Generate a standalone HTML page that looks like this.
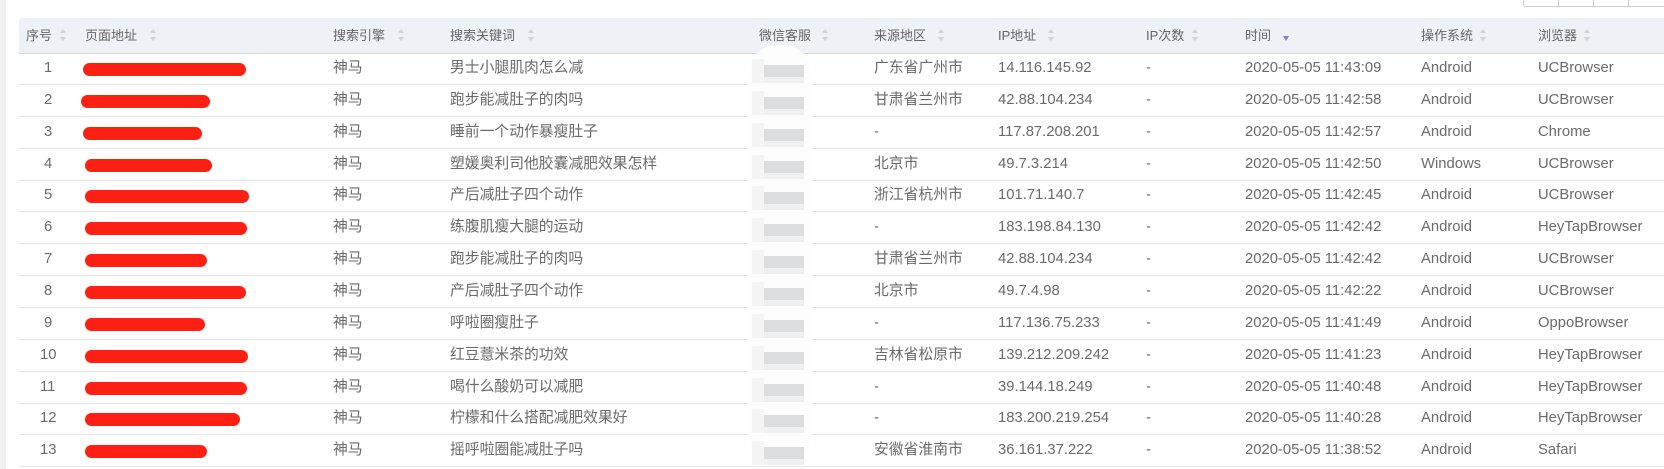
<!DOCTYPE html><html><head><meta charset="utf-8"><style>
body{margin:0;width:1664px;height:469px;background:#fff;position:relative;overflow:hidden;font-family:"Liberation Sans","Noto Sans CJK SC",sans-serif;font-size:13px;color:#666}
.strip{position:absolute;left:0;top:0;width:6px;height:469px;background:#f0f0f0}
.hdr{position:absolute;left:19px;top:18px;right:0;height:35px;background:#eef1f6;border-bottom:1px solid #d3d6dc;border-radius:3px 0 0 0}
.t{position:absolute;white-space:nowrap;line-height:15px}
.b{font-size:14.8px;line-height:17px;color:#6a6a6a}
.row{position:absolute;left:19px;right:0;height:31px;border-bottom:1px solid #e6e6e6}
.s{position:absolute;width:7px;height:15px}
.s:before{content:"";position:absolute;left:0;top:0;border:3.5px solid transparent;border-bottom:4px solid #d0d3d9;border-top:0}
.s:after{content:"";position:absolute;left:0;top:8px;border:3.5px solid transparent;border-top:4px solid #d0d3d9;border-bottom:0}
.red{position:absolute;height:13px;background:#ff2014;border-radius:8px}
.btn{position:absolute;top:-2px;width:34px;height:8px;border:1px solid #ccc;border-top:0}
</style></head><body>
<div class="strip"></div>
<div class="btn" style="left:1523px;border-radius:0 0 0 3px"></div>
<div class="btn" style="left:1558px"></div>
<div class="btn" style="left:1593px"></div>
<div class="btn" style="left:1628px;width:40px"></div>
<div class="hdr"></div>
<div class="t" style="left:26px;top:28px">序号</div><div class="s" style="left:60px;top:29px"></div>
<div class="t" style="left:85px;top:28px">页面地址</div><div class="s" style="left:150px;top:29px"></div>
<div class="t" style="left:333px;top:28px">搜索引擎</div><div class="s" style="left:398px;top:29px"></div>
<div class="t" style="left:450px;top:28px">搜索关键词</div><div class="s" style="left:528px;top:29px"></div>
<div class="t" style="left:759px;top:28px">微信客服</div><div class="s" style="left:822px;top:29px"></div>
<div class="t" style="left:874px;top:28px">来源地区</div><div class="s" style="left:938px;top:29px"></div>
<div class="t" style="left:998px;top:28px">IP地址</div><div class="s" style="left:1048px;top:29px"></div>
<div class="t" style="left:1146px;top:28px">IP次数</div><div class="s" style="left:1192px;top:29px"></div>
<div class="t" style="left:1245px;top:28px">时间</div>
<div style="position:absolute;left:1283px;top:36px;border:3.5px solid transparent;border-top:5px solid #7b7fdb;border-bottom:0"></div>
<div class="t" style="left:1421px;top:28px">操作系统</div><div class="s" style="left:1480px;top:29px"></div>
<div class="t" style="left:1538px;top:28px">浏览器</div><div class="s" style="left:1584px;top:29px"></div>
<div id="rows"></div>
<script>
var d=[
["男士小腿肌肉怎么减","广东省广州市","14.116.145.92","2020-05-05 11:43:09","Android","UCBrowser",83,246],
["跑步能减肚子的肉吗","甘肃省兰州市","42.88.104.234","2020-05-05 11:42:58","Android","UCBrowser",81,210],
["睡前一个动作暴瘦肚子","-","117.87.208.201","2020-05-05 11:42:57","Android","Chrome",83,202],
["塑媛奥利司他胶囊减肥效果怎样","北京市","49.7.3.214","2020-05-05 11:42:50","Windows","UCBrowser",85,212],
["产后减肚子四个动作","浙江省杭州市","101.71.140.7","2020-05-05 11:42:45","Android","UCBrowser",85,249],
["练腹肌瘦大腿的运动","-","183.198.84.130","2020-05-05 11:42:42","Android","HeyTapBrowser",85,247],
["跑步能减肚子的肉吗","甘肃省兰州市","42.88.104.234","2020-05-05 11:42:42","Android","UCBrowser",85,207],
["产后减肚子四个动作","北京市","49.7.4.98","2020-05-05 11:42:22","Android","UCBrowser",85,246],
["呼啦圈瘦肚子","-","117.136.75.233","2020-05-05 11:41:49","Android","OppoBrowser",85,205],
["红豆薏米茶的功效","吉林省松原市","139.212.209.242","2020-05-05 11:41:23","Android","HeyTapBrowser",85,248],
["喝什么酸奶可以减肥","-","39.144.18.249","2020-05-05 11:40:48","Android","HeyTapBrowser",85,247],
["柠檬和什么搭配减肥效果好","-","183.200.219.254","2020-05-05 11:40:28","Android","HeyTapBrowser",85,240],
["摇呼啦圈能减肚子吗","安徽省淮南市","36.161.37.222","2020-05-05 11:38:52","Android","Safari",85,207]];
var h="";
d.forEach(function(r,i){var top=53+i*31.85,c=top+7;
h+='<div class="row" style="top:'+top+'px"></div>';
h+='<div class="t b" style="left:'+(i<9?44:40)+'px;top:'+c+'px">'+(i+1)+'</div>';
h+='<div class="red" style="left:'+r[6]+'px;width:'+(r[7]-r[6])+'px;top:'+(c+3)+'px"></div>';
h+='<div class="t b" style="left:333px;top:'+c+'px">神马</div>';
h+='<div class="t b" style="left:450px;top:'+c+'px">'+r[0]+'</div>';
h+='<div class="t b" style="left:874px;top:'+c+'px">'+r[1]+'</div>';
h+='<div class="t b" style="left:998px;top:'+c+'px">'+r[2]+'</div>';
h+='<div class="t b" style="left:1146px;top:'+c+'px">-</div>';
h+='<div class="t b" style="left:1245px;top:'+c+'px">'+r[3]+'</div>';
h+='<div class="t b" style="left:1421px;top:'+c+'px">'+r[4]+'</div>';
h+='<div class="t b" style="left:1538px;top:'+c+'px">'+r[5]+'</div>';
});
h+='<div style="position:absolute;left:748px;top:45px;width:64px;height:420px;background:#fdfdfd;border-radius:30px"></div>';
d.forEach(function(r,i){var c=53+i*31.85;
h+='<div style="position:absolute;left:752px;top:'+(c+6)+'px;width:12px;height:24px;background:#f4f4f4"></div>';
h+='<div style="position:absolute;left:764px;top:'+(c+12)+'px;width:40px;height:12px;background:#dcdddf"></div>';
h+='<div style="position:absolute;left:764px;top:'+(c+24)+'px;width:40px;height:6px;background:#f0f0f0"></div>';
});
document.getElementById("rows").innerHTML=h;
</script>
</body></html>
